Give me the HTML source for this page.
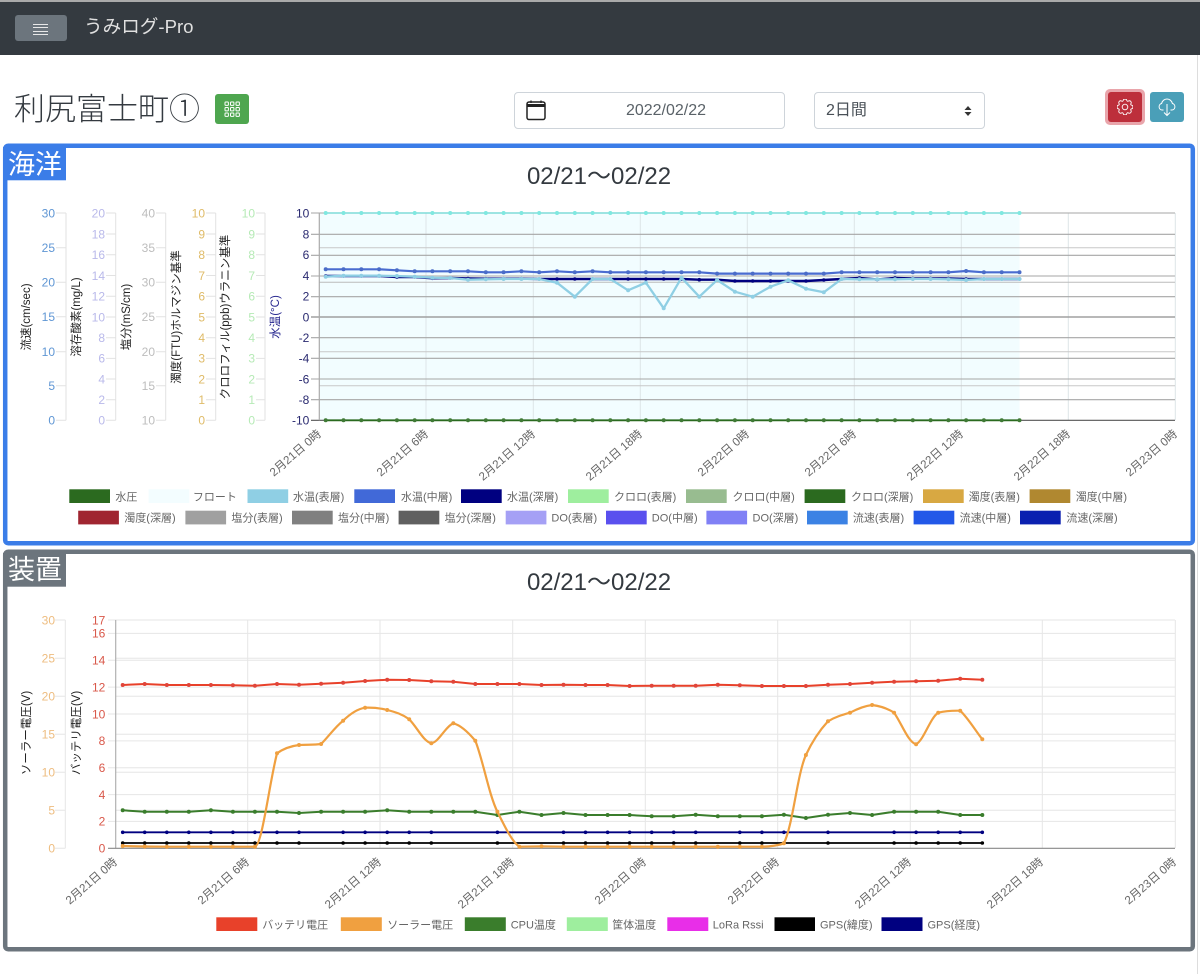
<!DOCTYPE html>
<html lang="ja">
<head>
<meta charset="utf-8">
<title>うみログ-Pro</title>
<style>
html,body{margin:0;padding:0;background:#fff}
body{width:1200px;height:974px;position:relative;overflow:hidden;font-family:"Liberation Sans","Noto Sans CJK JP",sans-serif;color:#343a40}
.a{position:absolute;box-sizing:border-box}
svg text{font-family:"Liberation Sans","Noto Sans CJK JP",sans-serif}
.t{font-size:12px;text-anchor:end}
.x{font-size:11.6px;fill:#666;text-anchor:end}
.l{font-size:11px;fill:#666}
.ti{font-size:11.5px;fill:#222;text-anchor:middle}
.h{font-size:24px;fill:#343a40;text-anchor:middle}
</style>
</head>
<body>
<div class="a" style="left:0;top:0;width:1200px;height:55px;background:#343a40;border-top:2px solid #aaa"></div>
<div class="a" style="left:15px;top:15px;width:52px;height:26px;background:#6c757d;border-radius:3px"></div>
<div class="a" style="left:33px;top:24px;width:15px;height:11px;border-top:1px solid #e8e8e8;border-bottom:1px solid #e8e8e8"></div>
<div class="a" style="left:33px;top:27px;width:15px;height:1px;background:#e8e8e8"></div>
<div class="a" style="left:33px;top:31px;width:15px;height:1px;background:#e8e8e8"></div>
<div class="a" style="left:84px;top:14px;font-size:18.6px;line-height:26px;color:#e0e0e0;white-space:nowrap">うみログ-Pro</div>

<div class="a" style="left:14px;top:87px;font-size:31px;line-height:46px;color:#343a40;white-space:nowrap;font-weight:300">利尻富士町①</div>
<div class="a" style="left:215px;top:94px;width:34px;height:30px;background:#4ea64f;border-radius:3px"></div>
<svg class="a" style="left:224px;top:101px" width="17" height="17" viewBox="0 0 17 17" fill="none" stroke="#fff" stroke-width="1">
<rect x="1" y="1" width="3.4" height="3.4" rx=".7"/><rect x="6.5" y="1" width="3.4" height="3.4" rx=".7"/><rect x="12" y="1" width="3.4" height="3.4" rx=".7"/>
<rect x="1" y="6.5" width="3.4" height="3.4" rx=".7"/><rect x="6.5" y="6.5" width="3.4" height="3.4" rx=".7"/><rect x="12" y="6.5" width="3.4" height="3.4" rx=".7"/>
<rect x="1" y="12" width="3.4" height="3.4" rx=".7"/><rect x="6.5" y="12" width="3.4" height="3.4" rx=".7"/><rect x="12" y="12" width="3.4" height="3.4" rx=".7"/>
</svg>

<div class="a" style="left:514px;top:92px;width:271px;height:37px;border:1px solid #ced4da;border-radius:4px;background:#fff"></div>
<svg class="a" style="left:525px;top:100px" width="22" height="21" viewBox="0 0 22 21" fill="none" stroke="#222">
<rect x="2" y="2" width="18" height="17.5" rx="2" stroke-width="1.5"/>
<path d="M2 5.5H20" stroke-width="3"/><path d="M6 .5V3M16 .5V3" stroke-width="1.3"/>
</svg>
<div class="a" style="left:547px;top:92px;width:238px;height:37px;line-height:37px;text-align:center;font-size:16px;color:#5a6268">2022/02/22</div>
<div class="a" style="left:814px;top:92px;width:171px;height:37px;border:1px solid #ced4da;border-radius:4px;background:#fff;line-height:35px;padding-left:11px;font-size:16px;color:#495057">2日間</div>
<svg class="a" style="left:963px;top:105px" width="10" height="12" viewBox="0 0 10 12" fill="#333"><path d="M1.5 5 5 1l3.5 4zM1.5 7 5 11l3.5-4z"/></svg>

<div class="a" style="left:1105px;top:89px;width:40px;height:36px;background:#e9a5ab;border-radius:5px"></div>
<div class="a" style="left:1108px;top:92px;width:34px;height:30px;background:#bd2f3b;border-radius:3px"></div>
<svg class="a" style="left:1117px;top:99px" width="16" height="16" viewBox="0 0 16 16" fill="none" stroke="#fff" stroke-width=".9">
<circle cx="8" cy="8" r="2.8"/>
<path d="M9.796 1.343c-.527-1.79-3.065-1.79-3.592 0l-.094.319a.873.873 0 0 1-1.255.52l-.292-.16c-1.64-.892-3.433.902-2.54 2.541l.159.292a.873.873 0 0 1-.52 1.255l-.319.094c-1.79.527-1.79 3.065 0 3.592l.319.094a.873.873 0 0 1 .52 1.255l-.16.292c-.892 1.64.901 3.434 2.541 2.54l.292-.159a.873.873 0 0 1 1.255.52l.094.319c.527 1.79 3.065 1.79 3.592 0l.094-.319a.873.873 0 0 1 1.255-.52l.292.16c1.64.893 3.434-.902 2.54-2.541l-.159-.292a.873.873 0 0 1 .52-1.255l.319-.094c1.79-.527 1.79-3.065 0-3.592l-.319-.094a.873.873 0 0 1-.52-1.255l.16-.292c.893-1.64-.902-3.433-2.541-2.54l-.292.159a.873.873 0 0 1-1.255-.52z"/>
</svg>
<div class="a" style="left:1150px;top:92px;width:34px;height:30px;background:#4a9fb8;border-radius:3px"></div>
<svg class="a" style="left:1158px;top:97px" width="18" height="20" viewBox="0 0 18 20" fill="none" stroke="#fff" stroke-width="1">
<path d="M5.5 13H4.2A3.3 3.3 0 0 1 3.6 6.5 5.5 5.5 0 0 1 14.4 6.5 3.3 3.3 0 0 1 13.8 13H12.5"/>
<path d="M9 7V18.5M6 15.5l3 3 3-3"/>
</svg>

<div class="a" style="left:1197px;top:55px;width:1px;height:919px;background:#ddd"></div>

<svg class="a" style="left:0;top:0" width="1200" height="974" viewBox="0 0 1200 974">
<defs>
<marker id="mc" markerUnits="userSpaceOnUse" markerWidth="6" markerHeight="6" refX="3" refY="3"><circle cx="3" cy="3" r="2" fill="#7fe8e0"/></marker>
<marker id="mg" markerUnits="userSpaceOnUse" markerWidth="6" markerHeight="6" refX="3" refY="3"><circle cx="3" cy="3" r="2" fill="#3f7a35"/></marker>
<marker id="mn" markerUnits="userSpaceOnUse" markerWidth="6" markerHeight="6" refX="3" refY="3"><circle cx="3" cy="3" r="1.8" fill="#000080"/></marker>
<marker id="mb" markerUnits="userSpaceOnUse" markerWidth="6" markerHeight="6" refX="3" refY="3"><circle cx="3" cy="3" r="2" fill="#4a6cc8"/></marker>
<marker id="ml" markerUnits="userSpaceOnUse" markerWidth="6" markerHeight="6" refX="3" refY="3"><circle cx="3" cy="3" r="2" fill="#8fcfe4"/></marker>
<marker id="mr" markerUnits="userSpaceOnUse" markerWidth="6" markerHeight="6" refX="3" refY="3"><circle cx="3" cy="3" r="2" fill="#e0453a"/></marker>
<marker id="mo" markerUnits="userSpaceOnUse" markerWidth="6" markerHeight="6" refX="3" refY="3"><circle cx="3" cy="3" r="2" fill="#f0a040"/></marker>
<marker id="mG" markerUnits="userSpaceOnUse" markerWidth="6" markerHeight="6" refX="3" refY="3"><circle cx="3" cy="3" r="2" fill="#3a7d2c"/></marker>
<marker id="mk" markerUnits="userSpaceOnUse" markerWidth="6" markerHeight="6" refX="3" refY="3"><circle cx="3" cy="3" r="1.8" fill="#000"/></marker>
</defs>

<!-- boxes -->
<rect x="5.2" y="145.7" width="1187.6" height="397.6" rx="3" fill="none" stroke="#3b7de8" stroke-width="4.5"/>
<rect x="3" y="147" width="63" height="33.3" fill="#3b7de8"/>
<text x="8" y="174" font-size="27" fill="#fff">海洋</text>
<rect x="5.2" y="551.7" width="1187.6" height="397.6" rx="3" fill="none" stroke="#6c757d" stroke-width="4.5"/>
<rect x="3" y="553" width="63" height="33.7" fill="#6c757d"/>
<text x="8" y="579" font-size="27" fill="#fff">装置</text>

<text class="h" x="599" y="184">02/21〜02/22</text>
<text class="h" x="599" y="590">02/21〜02/22</text>

<!-- TOP CHART -->
<rect x="320" y="213" width="699.5" height="207" fill="#f2fdff"/>
<g stroke="#dde5e8" stroke-width="1" fill="none">
<path d="M426 213V420M533.3 213V420M640.3 213V420M747.3 213V420M854.3 213V420M961.3 213V420M1068.3 213V420M1175.3 213V420"/>
</g>
<g stroke="#c8c8c8" stroke-width="1" fill="none">
<path d="M319 247.7H1175M319 351.7H1175M319 385.7H1175"/>
<path d="M319 282.3H1175" stroke="#bbb"/>
</g>
<g stroke="#a6a6a6" stroke-width="1.1" fill="none">
<path d="M311 213H1175M311 234.3H1175M311 255.3H1175M311 296.7H1175M311 337.7H1175M311 358.3H1175M311 379H1175M311 399.7H1175"/>
<path d="M311 276H1175" stroke="#c4c4c4" stroke-width="1.6"/>
<path d="M311 317H1175" stroke="#a0a0a0" stroke-width="1.6"/>
<path d="M311 420.3H1175" stroke="#555"/>
<path d="M319.3 213V420.3" stroke="#aaa" stroke-width="1.2"/>
</g>
<g stroke="#e2e2e2" fill="none" stroke-width="1">
<path d="M66 213V420.3M56 213H66M56 247.7H66M56 282.3H66M56 316.7H66M56 351.7H66M56 385.7H66M56 420.3H66"/>
<path d="M115.7 213V420.3M106 213H115.7M106 234H115.7M106 254.7H115.7M106 275.5H115.7M106 296.2H115.7M106 317H115.7M106 337.7H115.7M106 358.4H115.7M106 379H115.7M106 399.7H115.7M106 420.3H115.7"/>
<path d="M165.7 213V420.3M156 213H165.7M156 247.7H165.7M156 282.3H165.7M156 316.7H165.7M156 351.7H165.7M156 385.7H165.7M156 420.3H165.7"/>
<path d="M215.7 213V420.3M206 213H215.7M206 234H215.7M206 254.7H215.7M206 275.5H215.7M206 296.2H215.7M206 317H215.7M206 337.7H215.7M206 358.4H215.7M206 379H215.7M206 399.7H215.7M206 420.3H215.7"/>
<path d="M265 213V420.3M256 213H265M256 234H265M256 254.7H265M256 275.5H265M256 296.2H265M256 317H265M256 337.7H265M256 358.4H265M256 379H265M256 399.7H265M256 420.3H265"/>
</g>
<g fill="#5f96d4">
<text class="t" x="55" y="217.3">30</text><text class="t" x="55" y="252">25</text><text class="t" x="55" y="286.6">20</text><text class="t" x="55" y="321">15</text><text class="t" x="55" y="356">10</text><text class="t" x="55" y="390">5</text><text class="t" x="55" y="424.6">0</text>
</g>
<g fill="#b9b9ea">
<text class="t" x="105" y="217.3">20</text><text class="t" x="105" y="238.3">18</text><text class="t" x="105" y="259">16</text><text class="t" x="105" y="279.8">14</text><text class="t" x="105" y="300.5">12</text><text class="t" x="105" y="321.3">10</text><text class="t" x="105" y="342">8</text><text class="t" x="105" y="362.7">6</text><text class="t" x="105" y="383.3">4</text><text class="t" x="105" y="404">2</text><text class="t" x="105" y="424.6">0</text>
</g>
<g fill="#bdbdbd">
<text class="t" x="155" y="217.3">40</text><text class="t" x="155" y="252">35</text><text class="t" x="155" y="286.6">30</text><text class="t" x="155" y="321">25</text><text class="t" x="155" y="356">20</text><text class="t" x="155" y="390">15</text><text class="t" x="155" y="424.6">10</text>
</g>
<g fill="#dfbb68">
<text class="t" x="205" y="217.3">10</text><text class="t" x="205" y="238.3">9</text><text class="t" x="205" y="259">8</text><text class="t" x="205" y="279.8">7</text><text class="t" x="205" y="300.5">6</text><text class="t" x="205" y="321.3">5</text><text class="t" x="205" y="342">4</text><text class="t" x="205" y="362.7">3</text><text class="t" x="205" y="383.3">2</text><text class="t" x="205" y="404">1</text><text class="t" x="205" y="424.6">0</text>
</g>
<g fill="#b6eab6">
<text class="t" x="255" y="217.3">10</text><text class="t" x="255" y="238.3">9</text><text class="t" x="255" y="259">8</text><text class="t" x="255" y="279.8">7</text><text class="t" x="255" y="300.5">6</text><text class="t" x="255" y="321.3">5</text><text class="t" x="255" y="342">4</text><text class="t" x="255" y="362.7">3</text><text class="t" x="255" y="383.3">2</text><text class="t" x="255" y="404">1</text><text class="t" x="255" y="424.6">0</text>
</g>
<g fill="#2a2a70">
<text class="t" x="309.3" y="217.3">10</text><text class="t" x="309.3" y="238.3">8</text><text class="t" x="309.3" y="259">6</text><text class="t" x="309.3" y="279.8">4</text><text class="t" x="309.3" y="300.5">2</text><text class="t" x="309.3" y="321.3">0</text><text class="t" x="309.3" y="342">-2</text><text class="t" x="309.3" y="362.7">-4</text><text class="t" x="309.3" y="383.3">-6</text><text class="t" x="309.3" y="404">-8</text><text class="t" x="309.3" y="424.6">-10</text>
</g>
<text class="ti" transform="translate(30 317) rotate(-90)">流速(cm/sec)</text>
<text class="ti" transform="translate(80 317) rotate(-90)">溶存酸素(mg/L)</text>
<text class="ti" transform="translate(130 317) rotate(-90)">塩分(mS/cm)</text>
<text class="ti" transform="translate(180 317) rotate(-90)">濁度(FTU)ホルマジン基準</text>
<text class="ti" transform="translate(229 317) rotate(-90)">クロロフィル(ppb)ウラニン基準</text>
<text class="ti" style="fill:#2a2a90" transform="translate(279 317) rotate(-90)">水温(°C)</text>

<g>
<text class="x" transform="translate(322 435) rotate(-41)">2月21日 0時</text>
<text class="x" transform="translate(429 435) rotate(-41)">2月21日 6時</text>
<text class="x" transform="translate(536 435) rotate(-41)">2月21日 12時</text>
<text class="x" transform="translate(643 435) rotate(-41)">2月21日 18時</text>
<text class="x" transform="translate(750 435) rotate(-41)">2月22日 0時</text>
<text class="x" transform="translate(857 435) rotate(-41)">2月22日 6時</text>
<text class="x" transform="translate(964 435) rotate(-41)">2月22日 12時</text>
<text class="x" transform="translate(1071 435) rotate(-41)">2月22日 18時</text>
<text class="x" transform="translate(1178 435) rotate(-41)">2月23日 0時</text>
</g>

<g fill="none" stroke-linejoin="round">
<polyline stroke="#7fdcd8" stroke-width="1.6" marker-start="url(#mc)" marker-mid="url(#mc)" marker-end="url(#mc)" points="325.7,213 343.5,213 361.3,213 379.1,213 396.9,213 414.7,213 432.4,213 450.2,213 468,213 485.8,213 503.6,213 521.4,213 539.2,213 557,213 574.8,213 592.6,213 610.3,213 628.1,213 645.9,213 663.7,213 681.5,213 699.3,213 717.1,213 734.9,213 752.7,213 770.5,213 788.2,213 806,213 823.8,213 841.6,213 859.4,213 877.2,213 895,213 912.8,213 930.6,213 948.4,213 966.1,213 983.9,213 1001.7,213 1019.5,213"/>
<polyline stroke="#2a6a1f" stroke-width="1.8" marker-start="url(#mg)" marker-mid="url(#mg)" marker-end="url(#mg)" points="325.7,420.3 343.5,420.3 361.3,420.3 379.1,420.3 396.9,420.3 414.7,420.3 432.4,420.3 450.2,420.3 468,420.3 485.8,420.3 503.6,420.3 521.4,420.3 539.2,420.3 557,420.3 574.8,420.3 592.6,420.3 610.3,420.3 628.1,420.3 645.9,420.3 663.7,420.3 681.5,420.3 699.3,420.3 717.1,420.3 734.9,420.3 752.7,420.3 770.5,420.3 788.2,420.3 806,420.3 823.8,420.3 841.6,420.3 859.4,420.3 877.2,420.3 895,420.3 912.8,420.3 930.6,420.3 948.4,420.3 966.1,420.3 983.9,420.3 1001.7,420.3 1019.5,420.3"/>
<polyline stroke="#000080" stroke-width="2.4" marker-start="url(#mn)" marker-mid="url(#mn)" marker-end="url(#mn)" points="325.7,276 343.5,276 361.3,276 379.1,276 396.9,277 414.7,277 432.4,278.3 450.2,278 468,278.5 485.8,278.7 503.6,278.7 521.4,278.7 539.2,279 557,279 574.8,279 592.6,279 610.3,279 628.1,279 645.9,279 663.7,279 681.5,279 699.3,279.7 717.1,279.7 734.9,281 752.7,281 770.5,281 788.2,281 806,281 823.8,280 841.6,279 859.4,278 877.2,279.5 895,278 912.8,278.5 930.6,278.5 948.4,278.5 966.1,279 983.9,279 1001.7,279 1019.5,279"/>
<polyline stroke="#4a6cd0" stroke-width="2.2" marker-start="url(#mb)" marker-mid="url(#mb)" marker-end="url(#mb)" points="325.7,269.3 343.5,269.3 361.3,269.3 379.1,269.3 396.9,270.3 414.7,271.3 432.4,271.3 450.2,271.3 468,271.3 485.8,272.3 503.6,272.3 521.4,271.3 539.2,272.3 557,271.3 574.8,272.3 592.6,271.3 610.3,272.3 628.1,272.3 645.9,272.3 663.7,272.3 681.5,272.3 699.3,272.3 717.1,273.6 734.9,273.6 752.7,273.6 770.5,273.6 788.2,273.6 806,273.6 823.8,273.6 841.6,272.3 859.4,272.3 877.2,272.3 895,272.3 912.8,272.3 930.6,272.3 948.4,272.3 966.1,271 983.9,272.3 1001.7,272.3 1019.5,272.3"/>
<polyline stroke="#8fcfe4" stroke-width="2.3" marker-start="url(#ml)" marker-mid="url(#ml)" marker-end="url(#ml)" points="325.7,276.7 343.5,275.7 361.3,275.7 379.1,275.7 396.9,276 414.7,276.7 432.4,277.7 450.2,278 468,279.7 485.8,279.3 503.6,279 521.4,279 539.2,279 557,282.7 574.8,296.7 592.6,279 610.3,279 628.1,290.3 645.9,282.7 663.7,308.3 681.5,277.7 699.3,296.7 717.1,280 734.9,291.7 752.7,296.7 770.5,286.7 788.2,280.3 806,288.7 823.8,292.3 841.6,279 859.4,279.3 877.2,279.3 895,279.3 912.8,279 930.6,279 948.4,279.3 966.1,280 983.9,279 1001.7,279 1019.5,279"/>
</g>

<!-- top legend -->
<g>
<rect x="69.3" y="489.3" width="40.7" height="13.7" fill="#2b6a1f"/><text class="l" x="115.4" y="500.5">水圧</text>
<rect x="148.6" y="489.3" width="40.7" height="13.7" fill="#f3fdff"/><text class="l" x="192.9" y="500.5">フロート</text>
<rect x="247.5" y="489.3" width="40.7" height="13.7" fill="#8fcfe4"/><text class="l" x="293" y="500.5">水温(表層)</text>
<rect x="354.3" y="489.3" width="40.7" height="13.7" fill="#4169d8"/><text class="l" x="401" y="500.5">水温(中層)</text>
<rect x="461" y="489.3" width="40.7" height="13.7" fill="#000080"/><text class="l" x="507" y="500.5">水温(深層)</text>
<rect x="568" y="489.3" width="40.7" height="13.7" fill="#9eee9e"/><text class="l" x="614" y="500.5">クロロ(表層)</text>
<rect x="686" y="489.3" width="40.7" height="13.7" fill="#98bc90"/><text class="l" x="732.5" y="500.5">クロロ(中層)</text>
<rect x="804.6" y="489.3" width="40.7" height="13.7" fill="#2b6a1f"/><text class="l" x="851" y="500.5">クロロ(深層)</text>
<rect x="923" y="489.3" width="40.7" height="13.7" fill="#d8a842"/><text class="l" x="968.6" y="500.5">濁度(表層)</text>
<rect x="1029.6" y="489.3" width="40.7" height="13.7" fill="#b08830"/><text class="l" x="1075.7" y="500.5">濁度(中層)</text>

<rect x="78.2" y="510.7" width="40.7" height="13.7" fill="#a02530"/><text class="l" x="124.3" y="521.6">濁度(深層)</text>
<rect x="185.4" y="510.7" width="40.7" height="13.7" fill="#a0a0a0"/><text class="l" x="231.4" y="521.6">塩分(表層)</text>
<rect x="292" y="510.7" width="40.7" height="13.7" fill="#808080"/><text class="l" x="338" y="521.6">塩分(中層)</text>
<rect x="398.6" y="510.7" width="40.7" height="13.7" fill="#606060"/><text class="l" x="444.6" y="521.6">塩分(深層)</text>
<rect x="505.7" y="510.7" width="40.7" height="13.7" fill="#a5a0f5"/><text class="l" x="551.4" y="521.6">DO(表層)</text>
<rect x="606" y="510.7" width="40.7" height="13.7" fill="#5a50ee"/><text class="l" x="651.8" y="521.6">DO(中層)</text>
<rect x="706.4" y="510.7" width="40.7" height="13.7" fill="#8080f5"/><text class="l" x="752.5" y="521.6">DO(深層)</text>
<rect x="807" y="510.7" width="40.7" height="13.7" fill="#3b82e4"/><text class="l" x="852.9" y="521.6">流速(表層)</text>
<rect x="913.6" y="510.7" width="40.7" height="13.7" fill="#2258e8"/><text class="l" x="959.6" y="521.6">流速(中層)</text>
<rect x="1020" y="510.7" width="40.7" height="13.7" fill="#0a20b0"/><text class="l" x="1066.4" y="521.6">流速(深層)</text>
</g>

<!-- BOTTOM CHART -->
<g stroke="#e6e6e6" fill="none" stroke-width="1">
<path d="M247.7 620V848M380 620V848M512.7 620V848M645.3 620V848M777.7 620V848M910.3 620V848M1042.3 620V848M1175.3 620V848"/>
<path d="M115.7 658.3H1175M115.7 696.3H1175M115.7 734.2H1175M115.7 772.2H1175M115.7 810.2H1175"/>
<path d="M108 620H1175M108 633.4H1175M108 660.3H1175M108 687.1H1175M108 714H1175M108 740.9H1175M108 767.7H1175M108 794.6H1175M108 821.4H1175"/>
<path d="M65.3 620V848.3M55 620H65.3M55 658.3H65.3M55 696.3H65.3M55 734.2H65.3M55 772.2H65.3M55 810.2H65.3M55 848.3H65.3"/>
</g>
<path d="M115.7 620V848.3" stroke="#b0b0b0" stroke-width="1.2" fill="none"/>
<path d="M108 848.3H1175" stroke="#888" stroke-width="1.2" fill="none"/>
<g fill="#eebd80">
<text class="t" x="55" y="624.3">30</text><text class="t" x="55" y="662.6">25</text><text class="t" x="55" y="700.6">20</text><text class="t" x="55" y="738.5">15</text><text class="t" x="55" y="776.5">10</text><text class="t" x="55" y="814.5">5</text><text class="t" x="55" y="852.6">0</text>
</g>
<g fill="#d9584a">
<text class="t" x="105.3" y="624.3">17</text><text class="t" x="105.3" y="637.7">16</text><text class="t" x="105.3" y="664.6">14</text><text class="t" x="105.3" y="691.4">12</text><text class="t" x="105.3" y="718.3">10</text><text class="t" x="105.3" y="745.2">8</text><text class="t" x="105.3" y="772">6</text><text class="t" x="105.3" y="798.9">4</text><text class="t" x="105.3" y="825.7">2</text><text class="t" x="105.3" y="852.6">0</text>
</g>
<text class="ti" transform="translate(30 733) rotate(-90)">ソーラー電圧(V)</text>
<text class="ti" transform="translate(80 733) rotate(-90)">バッテリ電圧(V)</text>

<g>
<text class="x" transform="translate(118 863) rotate(-41)">2月21日 0時</text>
<text class="x" transform="translate(250 863) rotate(-41)">2月21日 6時</text>
<text class="x" transform="translate(382 863) rotate(-41)">2月21日 12時</text>
<text class="x" transform="translate(515 863) rotate(-41)">2月21日 18時</text>
<text class="x" transform="translate(647 863) rotate(-41)">2月22日 0時</text>
<text class="x" transform="translate(780 863) rotate(-41)">2月22日 6時</text>
<text class="x" transform="translate(912 863) rotate(-41)">2月22日 12時</text>
<text class="x" transform="translate(1044 863) rotate(-41)">2月22日 18時</text>
<text class="x" transform="translate(1177 863) rotate(-41)">2月23日 0時</text>
</g>

<g fill="none" stroke-linejoin="round">
<polyline stroke="#000" stroke-width="1.8" marker-start="url(#mk)" marker-mid="url(#mk)" marker-end="url(#mk)" points="122.7,843 144.7,843 166.8,843 188.8,843 210.9,843 232.9,843 254.9,843 277,843 299,843 343.1,843 365.1,843 387.2,843 409.2,843 431.3,843 497.4,843 563.5,843 585.5,843 607.6,843 629.6,843 651.7,843 673.7,843 695.7,843 739.8,843 761.9,843 783.9,843 828,843 894.1,843 916.1,843 938.2,843 960.2,843 982.3,843"/>
<polyline stroke="#000080" stroke-width="1.8" marker-start="url(#mn)" marker-mid="url(#mn)" marker-end="url(#mn)" points="122.7,832.3 144.7,832.3 166.8,832.3 188.8,832.3 210.9,832.3 232.9,832.3 254.9,832.3 277,832.3 299,832.3 343.1,832.3 365.1,832.3 387.2,832.3 409.2,832.3 431.3,832.3 497.4,832.3 563.5,832.3 585.5,832.3 607.6,832.3 629.6,832.3 651.7,832.3 673.7,832.3 695.7,832.3 739.8,832.3 761.9,832.3 783.9,832.3 828,832.3 894.1,832.3 916.1,832.3 938.2,832.3 960.2,832.3 982.3,832.3"/>
<polyline stroke="#3a7d2c" stroke-width="2" marker-start="url(#mG)" marker-mid="url(#mG)" marker-end="url(#mG)" points="122.7,810.3 144.7,811.7 166.8,811.7 188.8,811.7 210.9,810.3 232.9,811.7 254.9,811.7 277,811.7 299,813 321.1,811.7 343.1,811.7 365.1,811.7 387.2,810.3 409.2,811.7 431.3,811.7 453.3,811.7 475.3,811.7 497.4,815 519.4,811.7 541.5,815 563.5,813 585.5,815 607.6,815 629.6,815 651.7,816.3 673.7,816.3 695.7,814.7 717.8,816.3 739.8,816.3 761.9,816.3 783.9,814.7 805.9,818 828,814.7 850,813 872.1,815 894.1,811.7 916.1,811.7 938.2,811.7 960.2,815 982.3,815"/>
<polyline stroke="#e8412a" stroke-width="2" marker-start="url(#mr)" marker-mid="url(#mr)" marker-end="url(#mr)" points="122.7,685 144.7,684 166.8,685 188.8,685 210.9,685 232.9,685.3 254.9,685.7 277,684 299,684.7 321.1,683.7 343.1,682.7 365.1,681 387.2,679.7 409.2,680 431.3,681.3 453.3,681.7 475.3,684 497.4,684 519.4,684 541.5,685 563.5,684.7 585.5,685 607.6,685 629.6,686 651.7,685.7 673.7,685.7 695.7,685.7 717.8,684.7 739.8,685.3 761.9,686 783.9,686 805.9,686 828,684.7 850,684 872.1,682.7 894.1,681.7 916.1,681.3 938.2,680.7 960.2,678.7 982.3,679.7"/>
<path stroke="#f0a040" stroke-width="2.2" marker-start="url(#mo)" marker-mid="url(#mo)" marker-end="url(#mo)" d="M122.7 846L144.7 846.5L166.8 846.7L188.8 846.7L210.9 846.7L232.9 846.7L254.9 846.7C262 846 269 785 277 753.3C283 749 291 746 299 745C307 744.5 314 745 321.1 744C329 736 335 727 343.1 720.7C350 714 357 709 365.1 707.7C372 707.5 380 708 387.2 710C395 712 402 714 409.2 719.3C417 727 423 741 431.3 743.3C439 742 445 727 453.3 723.3C460 725 468 732 475.3 740.7C483 760 489 795 497.4 811.7C504 825 512 842 519.4 846.7L541.5 846.3L563.5 846.7L585.5 846.7L607.6 846.7L629.6 846.7L651.7 846.7L673.7 846.7L695.7 846.7L717.8 846.7L739.8 846.7L761.9 846.7C769 846.5 777 846 783.9 843.3C793 825 797 775 805.9 755C812 742 820 730 828 721.3C835 717 842 715 850 712.7C857 709 864 706 872.1 705C880 706 887 708 894.1 712.7C902 724 908 742 916.1 744.3C924 740 930 718 938.2 712.7C945 711 952 710.5 960.2 710.7C968 718 975 730 982.3 739.3"/>
</g>

<!-- bottom legend -->
<g>
<rect x="216.3" y="917.3" width="41" height="13.7" fill="#e8412a"/><text class="l" x="262.2" y="928.5">バッテリ電圧</text>
<rect x="340.8" y="917.3" width="41" height="13.7" fill="#f0a040"/><text class="l" x="387.2" y="928.5">ソーラー電圧</text>
<rect x="464.8" y="917.3" width="41" height="13.7" fill="#3a7d2c"/><text class="l" x="510.7" y="928.5">CPU温度</text>
<rect x="566.8" y="917.3" width="41" height="13.7" fill="#9eee9e"/><text class="l" x="612.2" y="928.5">筐体温度</text>
<rect x="667.3" y="917.3" width="41" height="13.7" fill="#e82ee8"/><text class="l" x="712.8" y="928.5">LoRa Rssi</text>
<rect x="774.5" y="917.3" width="40.5" height="13.7" fill="#000"/><text class="l" x="820" y="928.5">GPS(緯度)</text>
<rect x="881.5" y="917.3" width="41" height="13.7" fill="#000080"/><text class="l" x="927.5" y="928.5">GPS(経度)</text>
</g>
</svg>
</body>
</html>
